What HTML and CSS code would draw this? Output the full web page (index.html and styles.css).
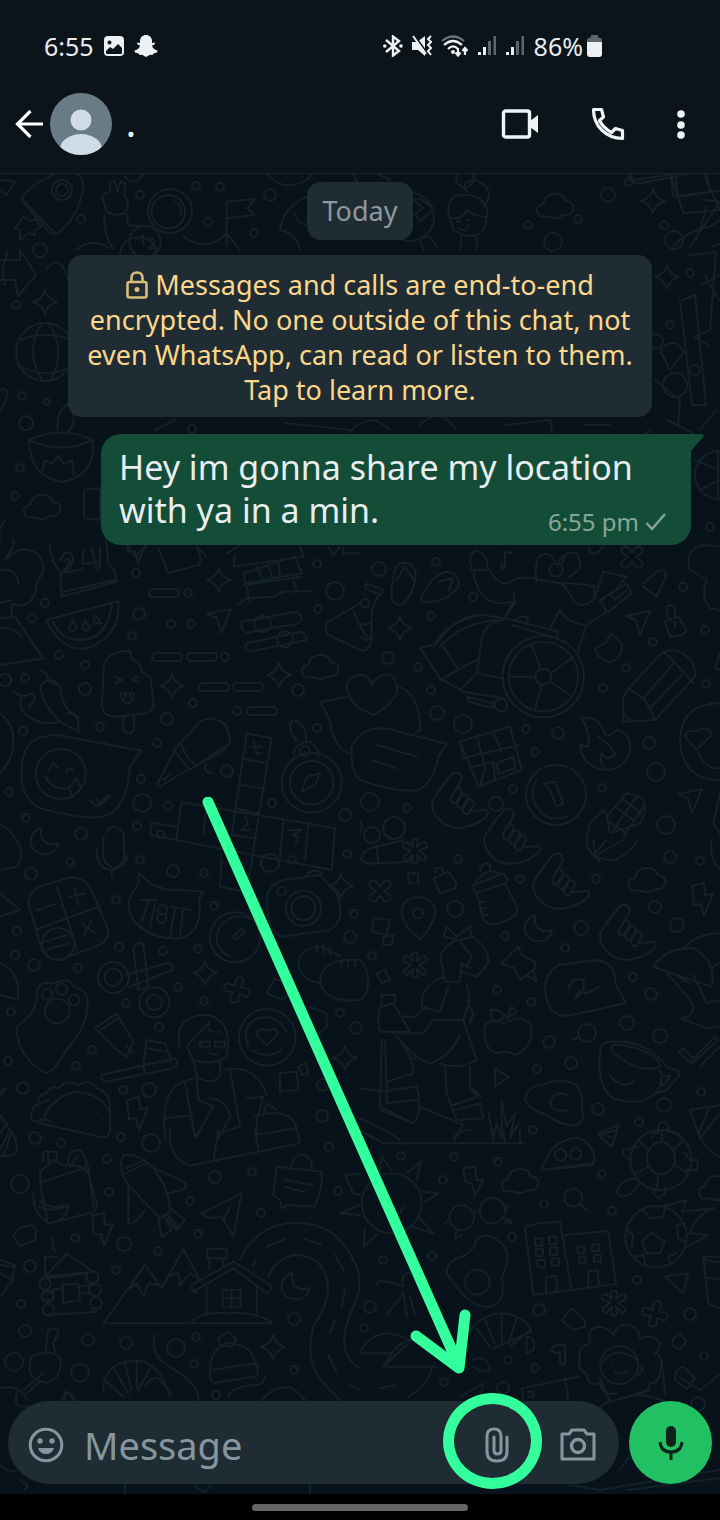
FILE: index.html
```html
<!DOCTYPE html>
<html lang="en">
<head>
  <meta charset="UTF-8">
  <meta name="viewport" content="width=device-width, initial-scale=1.0">
  <title>WhatsApp chat</title>
  <link rel="stylesheet" href="styles.css">
</head>
<body>

  <div class="status-bar">
    <div class="status-left">
      <span class="clock">6:55</span>
      <svg width="20" height="20" viewBox="0 0 20 20"><path fill="#edf1f3" fill-rule="evenodd" d="M4 0H16Q20 0 20 4V16Q20 20 16 20H4Q0 20 0 16V4Q0 0 4 0ZM5.500 4.500A2 2 0 1 0 5.510 4.500ZM2 15V17Q2 18 3 18H17Q18 18 18 17V12L14 8L9 13L6 11Z"/></svg>
      <svg width="24" height="22" viewBox="0 0 24 22"><path fill="#edf1f3" d="M12 0C15.500 0 18 2.500 18 6V8L21 7.600L20.500 9.600L18 10.500C18.500 13 20.500 14.800 23.500 15.500L23 17.500L19.500 18.500L18.500 20L16 19.700L12 22L8 19.700L5.500 20L4.500 18.500L1 17.500L.5 15.500C3.500 14.800 5.500 13 6 10.500L3.500 9.600L3 7.600L6 8V6C6 2.500 8.500 0 12 0Z"/></svg>
    </div>
    <div class="status-right">
      <svg width="20" height="22" viewBox="0 0 20 22"><path fill="none" stroke="#edf1f3" stroke-width="2.400" d="M3 5L16 16L10 20.500V1.500L16 6L3 17"/><circle cx="1.800" cy="11" r="1.800" fill="#edf1f3"/><circle cx="18" cy="11" r="1.800" fill="#edf1f3"/></svg>
      <svg width="20" height="22" viewBox="0 0 20 22"><path fill="#edf1f3" d="M0 7H5L13 1V21L6 15H0Z"/><path stroke="#0b141a" stroke-width="2" d="M3 1L15 18"/><path fill="none" stroke="#edf1f3" stroke-width="2" d="M1 1L14 19"/><path fill="none" stroke="#edf1f3" stroke-width="2" d="M19 1L16 4L19 7L16 10L19 13L16 16L19 20"/></svg>
      <svg width="28" height="22" viewBox="0 0 28 22"><g fill="none" stroke="#edf1f3" stroke-width="2.200"><path stroke="#68727a" d="M1 6Q12-3 23 6"/><path d="M3 10Q12 2 21 10M7 14Q12 9 17 14"/><path d="M17 13V20M14.500 17.500L17 20.500L19.500 17.500M24 20V13M21.500 16L24 13L26.500 16"/></g><circle cx="12" cy="17" r="2" fill="#edf1f3"/></svg>
      <svg width="19" height="22" viewBox="0 0 19 22"><path fill="#edf1f3" d="M0 17H3V20H0ZM5 12H8V20H5Z"/><path fill="#5c666d" d="M10 6H13V20H10ZM15.500 1H18V20H15.500Z"/></svg>
      <svg width="19" height="22" viewBox="0 0 19 22"><path fill="#edf1f3" d="M0 17H3V20H0ZM5 12H8V20H5Z"/><path fill="#5c666d" d="M10 6H13V20H10ZM15.500 1H18V20H15.500Z"/></svg>
      <span class="battery"><span>86%</span>
      <svg width="15" height="22" viewBox="0 0 15 22"><path fill="#5c666d" d="M4 0H11V2L15 4V9H0V4L4 2Z"/><path fill="#edf1f3" d="M0 7H15V19Q15 22 12 22H3Q0 22 0 19Z"/></svg></span>
    </div>
  </div>

  <header class="app-bar">
    <button type="button" class="icon-button back" aria-label="Back"><svg width="28" height="28" viewBox="0 0 28 28"><path fill="none" stroke="#fff" stroke-width="3.200" d="M28 14H3M15.500 1L2.500 14L15.500 27"/></svg></button>
    <svg class="avatar" width="62" height="62" viewBox="0 0 62 62"><defs><clipPath id="face"><circle cx="31" cy="31" r="31"/></clipPath></defs><circle cx="31" cy="31" r="31" fill="#687b86"/><g clip-path="url(#face)" fill="#d0dce5"><circle cx="31" cy="27" r="10.500"/><ellipse cx="31" cy="56" rx="21" ry="15"/></g></svg>
    <h1 class="contact">.</h1>
    <div class="actions">
      <button type="button" class="icon-button" aria-label="Video call"><svg width="38" height="34" viewBox="0 0 38 34"><rect x="2.500" y="4" width="26" height="26" rx="2" fill="none" stroke="#f0f4f6" stroke-width="3.400"/><path fill="#f0f4f6" d="M29 14L37 8V26L29 20Z"/></svg></button>
      <button type="button" class="icon-button" aria-label="Call"><svg width="34" height="34" viewBox="0 0 34 34"><path fill="none" stroke="#f0f4f6" stroke-width="3.200" stroke-linejoin="round" d="M2.500 2.500H10.500L12.500 10L8.500 13.500C11 18.500 15 22.500 20.500 25.500L24.500 21.500L31.500 23.500V31.500C15 31.500 2.500 19 2.500 2.500Z"/></svg></button>
      <button type="button" class="icon-button more" aria-label="More options"><svg width="8" height="30" viewBox="0 0 8 30"><g fill="#f0f4f6"><circle cx="4" cy="5" r="3.800"/><circle cx="4" cy="16" r="3.800"/><circle cx="4" cy="26" r="3.800"/></g></svg></button>
    </div>
  </header>

  <main class="chat">
    <svg class="wallpaper" viewBox="0 174 720 1320" preserveAspectRatio="xMidYMin slice" aria-hidden="true">
      <defs>
        <path id="star" d="M0-12Q2-3 12 0Q2 3 0 12Q-2 3-12 0Q-2-3 0-12Z"/>
        <path id="bolt" d="M-10-14L2-17L3-5L11-6L2 16L-1 4L-8 5Z"/>
        <path id="plane" d="M-12-6L12-11L2 13L-2-2Z"/>
        <path id="cloud" d="M-16 10Q-22 0-12-2Q-10-12 0-12Q10-12 10-5Q20-4 18 4Q16 10 8 9Q2 14-4 11Z"/>
        <path id="cross" d="M-3-3L-4-9Q-4-13 0-13Q4-13 4-9L3-3L9-4Q13-4 13 0Q13 4 9 4L3 3L4 9Q4 13 0 13Q-4 13-4 9L-3 3L-9 4Q-13 4-13 0Q-13-4-9-4Z"/>
        <path id="flower" d="M-2-4L-3-11Q0-14 3-11L2-4L8-9Q13-8 12-4L4 0L11 5Q12 9 8 10L2 4L3 11Q0 14-3 11L-2 4L-8 10Q-12 9-11 5L-4 0L-12-4Q-13-8-8-9Z"/>
        <path id="moon" d="M-4-13Q-16-8-14 4Q-10 14 2 13Q12 12 13 2Q4 5-1 0Q-5-5-4-13Z"/>
        <path id="pill" d="M-11-4H11Q15-4 15 0Q15 4 11 4H-11Q-15 4-15 0Q-15-4-11-4Z"/>
        <path id="hand" d="M-17 0Q-10-13 3-28Q12-32 13-23L2-4L8-14Q13-14 13-9L7 1Q2 2 2-4M8 1L14-8Q19-8 19-3L13 6Q8 7 8 1M14 6L20-3Q26-2 25 3L19 12Q13 13 14 6M23 9L38 8Q42 13 30 20Q10 30-3 23Q-18 13-17 0"/>
      </defs>
      <g class="dots">
        <circle cx="62" cy="190" r="10"/><circle cx="62" cy="190" r="6"/><circle cx="140" cy="195" r="4"/><circle cx="170" cy="211" r="22"/><circle cx="196" cy="186" r="4"/><circle cx="220" cy="187" r="4"/><circle cx="270" cy="195" r="6"/><circle cx="208" cy="222" r="4"/><circle cx="254" cy="233" r="4"/><circle cx="81" cy="219" r="4"/>
        <circle cx="465" cy="178" r="9"/><circle cx="608" cy="195" r="7"/><circle cx="629" cy="182" r="4"/><circle cx="578" cy="219" r="4"/><circle cx="528" cy="225" r="4"/><circle cx="664" cy="225" r="4"/><circle cx="553" cy="242" r="9"/><circle cx="410" cy="217" r="24"/><circle cx="674" cy="240" r="9"/>
        <circle cx="40" cy="250" r="7"/><circle cx="16" cy="305" r="4"/><circle cx="690" cy="273" r="4"/><circle cx="670" cy="325" r="4"/><circle cx="656" cy="341" r="7"/><circle cx="45" cy="352" r="29"/><circle cx="26" cy="423" r="7"/><circle cx="22" cy="396" r="4"/><circle cx="47" cy="402" r="3"/><circle cx="20" cy="468" r="4"/><circle cx="15" cy="496" r="4"/><circle cx="192" cy="429" r="4"/><circle cx="710" cy="527" r="4"/><circle cx="695" cy="370" r="5"/><circle cx="719" cy="475" r="24"/><circle cx="675" cy="385" r="12"/>
        <circle cx="136" cy="573" r="4"/><circle cx="45" cy="603" r="4"/><circle cx="32" cy="618" r="4"/><circle cx="188" cy="593" r="4"/><circle cx="139" cy="614" r="6"/><circle cx="171" cy="624" r="4"/><circle cx="191" cy="624" r="4"/><circle cx="132" cy="636" r="4"/><circle cx="59" cy="655" r="4"/><circle cx="85" cy="665" r="4"/><circle cx="25" cy="678" r="4"/><circle cx="85" cy="689" r="6"/><circle cx="193" cy="703" r="4"/><circle cx="167" cy="719" r="6"/><circle cx="100" cy="727" r="4"/><circle cx="23" cy="731" r="4"/><circle cx="157" cy="743" r="4"/><circle cx="227" cy="771" r="6"/><circle cx="141" cy="779" r="4"/><circle cx="142" cy="803" r="9"/><circle cx="168" cy="806" r="4"/><circle cx="9" cy="792" r="4"/><circle cx="26" cy="818" r="4"/><circle cx="225" cy="657" r="4"/><circle cx="298" cy="690" r="6"/><circle cx="317" cy="564" r="4"/><circle cx="335" cy="591" r="9"/><circle cx="318" cy="609" r="4"/><circle cx="317" cy="728" r="4"/><circle cx="237" cy="711" r="4"/><circle cx="272" cy="803" r="4"/><circle cx="345" cy="815" r="6"/><circle cx="137" cy="826" r="4"/><circle cx="81" cy="834" r="6"/><circle cx="5" cy="680" r="6"/>
        <circle cx="379" cy="569" r="7"/><circle cx="436" cy="562" r="4"/><circle cx="473" cy="597" r="4"/><circle cx="431" cy="616" r="4"/><circle cx="388" cy="658" r="6"/><circle cx="418" cy="667" r="4"/><circle cx="431" cy="690" r="4"/><circle cx="437" cy="713" r="7"/><circle cx="463" cy="724" r="9"/><circle cx="526" cy="729" r="4"/><circle cx="558" cy="733" r="6"/><circle cx="535" cy="752" r="4"/><circle cx="513" cy="789" r="4"/><circle cx="496" cy="804" r="7"/><circle cx="407" cy="808" r="4"/><circle cx="370" cy="802" r="9"/><circle cx="394" cy="828" r="11"/><circle cx="372" cy="835" r="8"/><circle cx="603" cy="688" r="4"/><circle cx="626" cy="668" r="4"/><circle cx="653" cy="642" r="4"/><circle cx="705" cy="630" r="4"/><circle cx="683" cy="587" r="4"/><circle cx="706" cy="684" r="4"/><circle cx="649" cy="743" r="6"/><circle cx="656" cy="772" r="9"/><circle cx="602" cy="788" r="4"/><circle cx="666" cy="825" r="9"/>
        <circle cx="31" cy="874" r="6"/><circle cx="70" cy="862" r="4"/><circle cx="140" cy="860" r="4"/><circle cx="173" cy="871" r="6"/><circle cx="204" cy="873" r="4"/><circle cx="116" cy="900" r="4"/><circle cx="214" cy="906" r="4"/><circle cx="17" cy="931" r="4"/><circle cx="15" cy="955" r="4"/><circle cx="34" cy="965" r="6"/><circle cx="78" cy="968" r="4"/><circle cx="119" cy="947" r="4"/><circle cx="163" cy="951" r="4"/><circle cx="198" cy="949" r="4"/><circle cx="126" cy="1003" r="4"/><circle cx="178" cy="987" r="4"/><circle cx="204" cy="1001" r="4"/><circle cx="11" cy="1012" r="4"/><circle cx="159" cy="1027" r="4"/><circle cx="92" cy="1050" r="4"/><circle cx="76" cy="1066" r="4"/><circle cx="8" cy="1061" r="4"/><circle cx="23" cy="1088" r="6"/><circle cx="123" cy="1090" r="4"/><circle cx="149" cy="1090" r="7"/><circle cx="270" cy="863" r="9"/><circle cx="292" cy="860" r="4"/><circle cx="347" cy="854" r="4"/><circle cx="350" cy="937" r="6"/><circle cx="354" cy="914" r="4"/><circle cx="340" cy="1013" r="4"/><circle cx="356" cy="1028" r="6"/><circle cx="322" cy="1116" r="6"/><circle cx="323" cy="1085" r="6"/>
        <circle cx="458" cy="859" r="4"/><circle cx="520" cy="879" r="4"/><circle cx="455" cy="909" r="8"/><circle cx="505" cy="936" r="4"/><circle cx="581" cy="928" r="7"/><circle cx="596" cy="879" r="4"/><circle cx="670" cy="857" r="6"/><circle cx="700" cy="861" r="4"/><circle cx="655" cy="907" r="6"/><circle cx="677" cy="925" r="7"/><circle cx="565" cy="948" r="4"/><circle cx="633" cy="977" r="4"/><circle cx="651" cy="994" r="6"/><circle cx="497" cy="990" r="4"/><circle cx="531" cy="1002" r="4"/><circle cx="587" cy="1033" r="9"/><circle cx="549" cy="1042" r="6"/><circle cx="627" cy="1023" r="7"/><circle cx="660" cy="1036" r="7"/><circle cx="571" cy="1063" r="6"/><circle cx="537" cy="1069" r="4"/><circle cx="598" cy="1109" r="6"/><circle cx="664" cy="1105" r="7"/><circle cx="701" cy="1092" r="4"/><circle cx="639" cy="1122" r="4"/><circle cx="533" cy="1130" r="4"/><circle cx="372" cy="956" r="4"/>
        <circle cx="35" cy="1138" r="6"/><circle cx="61" cy="1143" r="4"/><circle cx="121" cy="1137" r="4"/><circle cx="151" cy="1143" r="9"/><circle cx="107" cy="1159" r="4"/><circle cx="20" cy="1184" r="9"/><circle cx="109" cy="1192" r="4"/><circle cx="190" cy="1201" r="4"/><circle cx="215" cy="1177" r="6"/><circle cx="252" cy="1172" r="4"/><circle cx="261" cy="1213" r="4"/><circle cx="198" cy="1234" r="4"/><circle cx="124" cy="1244" r="7"/><circle cx="75" cy="1238" r="4"/><circle cx="158" cy="1251" r="4"/><circle cx="30" cy="1266" r="6"/><circle cx="116" cy="1270" r="4"/><circle cx="21" cy="1304" r="4"/><circle cx="25" cy="1331" r="6"/><circle cx="88" cy="1340" r="6"/><circle cx="126" cy="1343" r="6"/><circle cx="176" cy="1348" r="9"/><circle cx="196" cy="1337" r="4"/><circle cx="294" cy="1319" r="6"/><circle cx="329" cy="1147" r="4"/><circle cx="338" cy="1191" r="4"/><circle cx="14" cy="1362" r="9"/><circle cx="80" cy="1373" r="9"/><circle cx="194" cy="1364" r="4"/><circle cx="294" cy="1370" r="4"/><circle cx="216" cy="1395" r="4"/>
        <circle cx="401" cy="1156" r="4"/><circle cx="454" cy="1157" r="4"/><circle cx="498" cy="1162" r="4"/><circle cx="443" cy="1180" r="4"/><circle cx="544" cy="1204" r="4"/><circle cx="602" cy="1174" r="4"/><circle cx="612" cy="1211" r="4"/><circle cx="512" cy="1237" r="4"/><circle cx="432" cy="1256" r="4"/><circle cx="383" cy="1260" r="4"/><circle cx="370" cy="1307" r="6"/><circle cx="364" cy="1328" r="4"/><circle cx="539" cy="1310" r="6"/><circle cx="637" cy="1280" r="4"/><circle cx="690" cy="1314" r="6"/><circle cx="704" cy="1356" r="4"/><circle cx="535" cy="1368" r="4"/><circle cx="444" cy="1382" r="4"/><circle cx="503" cy="1388" r="6"/><circle cx="508" cy="1360" r="4"/><circle cx="698" cy="1404" r="7"/>
      </g>
      <g class="small">
        <use href="#star" x="219" y="580"/><use href="#star" x="172" y="686"/><use href="#star" x="279" y="675"/><use href="#star" x="400" y="628"/><use href="#star" x="205" y="973"/><use href="#star" x="341" y="886"/><use href="#star" x="345" y="1058"/><use href="#star" x="273" y="1347"/><use href="#star" x="45" y="302"/><use href="#star" x="667" y="277"/><use href="#star" x="653" y="201"/>
        <use href="#bolt" x="137" y="1114"/><use href="#bolt" x="102" y="1230"/><use href="#bolt" x="702" y="900"/><use href="#bolt" x="136" y="547"/>
        <use href="#plane" x="219" y="620"/><use href="#plane" x="638" y="622"/><use href="#plane" x="690" y="800"/>
        <use href="#cloud" x="42" y="507"/><use href="#cloud" x="320" y="667"/><use href="#cloud" x="555" y="206"/><use href="#cloud" x="647" y="880"/><use href="#cloud" x="520" y="1181"/><use href="#cloud" x="717" y="1188"/>
        <use href="#cross" transform="translate(380 891) rotate(45)"/><use href="#cross" transform="translate(632 557) rotate(45)"/><use href="#cross" transform="translate(237 990) rotate(15)"/><use href="#cross" transform="translate(655 1314) rotate(15)"/>
        <use href="#flower" x="415" y="965"/><use href="#flower" x="614" y="1303"/><use href="#flower" x="415" y="851"/>
        <use href="#moon" x="539" y="928"/><use href="#moon" x="296" y="1286"/><use href="#moon" x="45" y="841"/>
        <use href="#pill" x="164" y="593"/><use href="#pill" x="167" y="657"/><use href="#pill" x="202" y="657"/><use href="#pill" x="214" y="687"/><use href="#pill" x="248" y="687"/><use href="#pill" x="262" y="711"/>
        <use href="#hand" x="550" y="883"/><use href="#hand" x="617" y="934"/><use href="#hand" x="501" y="838"/><use href="#hand" x="449" y="802"/>
      </g>

      <!-- rocket, hand, flag, camera and people along the top -->
      <g class="large" transform="scale(.333333)">
        <path d="M0 540L45 545L20 585L0 570M65 600Q80 560 150 530L200 500Q250 520 250 560Q240 640 185 690Q170 710 145 695ZM75 605L165 700M70 650q20 20 40 5q0 20 15 25l-20 10v15l-20-5l-25 20v-30l-15-5z"/>
        <path d="M310 605Q300 580 330 575L330 545H345L352 575L362 545L376 550L372 585Q395 610 375 640Q340 650 320 635ZM312 645Q315 720 340 745M380 645L385 675L440 680M525 605Q550 615 540 645M375 530Q400 560 430 525M800 520Q850 580 920 540L960 500"/>
        <circle cx="505" cy="635" r="50"/><circle cx="435" cy="725" r="47"/>
        <path d="M430 705v30M415 715L430 705M445 720q15-10 18 3q0 15-18 22h20M230 750Q270 710 330 745M550 710Q620 760 680 700L720 750M680 735V605L765 597L742 625L765 645L680 655M840 690Q850 620 920 590M840 690Q890 700 900 750M885 640Q890 670 920 675M1060 520l15 35M1130 520l40 20l-15 20l25 20"/>
        <path d="M1240 600L1260 595L1300 625L1260 665L1245 640L1270 625ZM1345 640Q1340 580 1400 585Q1460 590 1462 640L1455 680Q1430 730 1360 690ZM1345 650Q1385 665 1400 630Q1420 650 1460 650M1400 575Q1380 540 1430 540Q1490 570 1450 620M1370 665h10M1400 660h10M1375 685Q1400 700 1405 675M1385 710L1380 750M1430 710V750M1270 750L1260 715L1290 710L1310 740M1885 520L1900 540L2040 520M1890 520Q1880 550 1920 550L2100 515M2020 740Q2060 690 2130 680Q2180 640 2220 660Q2230 700 2140 740M2160 650Q2190 680 2180 720"/>
        <path d="M2010 520L2020 590L2130 575L2120 515M2025 520L2035 590L2180 570M2100 500L2160 630L2050 640L2010 520M2110 600L2160 605L2070 740M2120 620L2090 720"/>
      </g>

      <g>
        <path d="M20 340Q46 330 72 340M18 365Q45 380 70 367M42 323Q24 350 42 381M48 323Q68 350 50 381M0 260L20 260V250L36 275L18 296L15 280L0 280M46 270Q60 250 68 280M8 250Q0 270 5 285M120 255Q122 235 145 238Q165 250 150 258M0 390Q12 385 4 405L0 410M29 440Q60 425 93 440Q96 475 63 482Q30 478 29 440ZM29 440Q60 455 93 440M42 473L45 460L52 464L58 456L64 464L72 460L74 475M58 430Q55 414 67 404Q80 418 68 432M5 520Q-3 530 0 540M84 490L100 488V520L84 518Z"/>
        <path d="M690 255L716 252L710 330L695 337L708 345M680 301L695 295L706 405L692 405ZM655 380L680 400L678 425M668 420L694 434M700 430L716 410M505 425L550 420L552 432M420 425Q440 405 455 428M350 432Q370 410 390 430M585 425H610M650 430L640 440M155 430L175 420M405 545L430 540M285 423L350 430"/>
        <path d="M660 350Q675 335 684 352L670 370ZM702 285L719 275M705 275L719 300M695 460L719 470M700 490L719 480M718 452V498"/>
      </g>

      <!-- calendar, melon, lolly, peppers, crossword -->
      <g class="large" transform="translate(0 540) scale(.333333)">
        <path d="M20 50L40 20V0M15 60Q60 10 110 40Q150 80 110 125Q110 180 70 195Q50 200 35 190V225M55 130Q50 80 0 90M0 190L35 180M0 235L45 230L130 355L0 375M0 265Q40 260 65 290M150 15Q150 60 180 95L185 170L350 125Q350 90 325 70L318 0M190 155L345 120"/>
        <path d="M183 60Q190 30 212 40Q232 60 195 98L245 88M193 62Q205 50 210 62Q205 75 183 105M250 30L248 72L300 65M275 20L290 90M300 25V85"/>
        <path d="M140 240L355 183Q360 250 320 290Q240 360 175 295Q145 260 140 240ZM160 245Q180 300 240 300Q320 300 335 195M220 240L205 265Q215 280 230 265ZM255 240L248 265Q260 280 270 262ZM285 225L280 250L305 250Z"/>
        <path d="M390 333Q310 330 310 400L306 500Q310 530 345 530L440 520Q465 510 460 480L450 410L425 395L420 375L395 355ZM370 530V570Q385 590 402 570V527M345 410L365 420L345 430M415 408L395 418L415 425M360 460H402Q400 490 380 490Q365 485 360 460M375 463V475M390 463V475"/>
        <path d="M40 455L65 470Q50 500 80 525Q120 560 180 545L235 575L235 530Q190 520 180 440Q150 400 120 440Q130 500 180 545M65 470L100 460L105 480L85 500M120 390L140 400L145 425L185 440M200 520Q220 505 230 535"/>
        <path d="M0 520Q40 550 40 600Q40 660 0 700M65 700Q65 600 130 590Q170 580 210 592L425 632L390 680Q380 780 345 810Q310 840 250 830Q160 820 110 800Q60 760 65 700Z"/><circle cx="182" cy="702" r="75"/>
        <path d="M135 705Q150 750 205 745M145 690l15-20l15 15M200 695q5-20 20-2M230 715L243 745L220 770L205 745ZM270 780L290 800L325 765M290 775L300 795L330 770"/>
        <path d="M540 610L600 545Q640 520 680 560Q690 590 690 610L590 675L570 690L520 630ZM545 615Q560 660 590 675M520 640L470 735L480 740L560 690M490 720L515 700M650 540Q680 545 680 570M590 675L660 640L690 610M620 670Q605 695 635 700"/>
        <path d="M740 580L815 595L765 895L695 885ZM732 658L803 668M720 735L790 745M705 805L775 820M545 787L1005 865L995 990L450 885L455 848L530 860M545 787L528 900M620 800L610 880M850 845L840 950M925 855L915 960M760 605L770 640H785M755 620H785M735 830L745 850L725 870H750M865 870L905 870L880 885Q905 890 885 910M470 875Q490 865 495 890L475 895Z"/>
        <path d="M475 25L505 100L595 75Q610 60 590 20M590 20L620 50M680 40L720 15M385 20L405 50L440 15M705 45L700 80L910 50L900 20M730 100L885 50L905 100L735 130ZM770 80L790 120M805 75L815 110M835 60L840 105M730 135L905 110M740 140L750 190M880 125L890 150M710 195L740 175L820 170L850 155L935 153M985 20L1000 45L1020 20M1030 20V40H1080"/>
        <path d="M725 245L880 217Q905 215 905 240Q900 255 850 258L740 278Q720 270 725 245ZM740 310L900 275Q920 280 920 300L750 335Q730 330 740 310Z"/><circle cx="788" cy="252" r="25"/><circle cx="855" cy="298" r="24"/>
        <circle cx="935" cy="728" r="90"/><circle cx="935" cy="728" r="65"/><circle cx="915" cy="633" r="15"/>
        <path d="M880 540Q860 550 880 590L890 605M880 540Q920 550 918 600M880 640Q890 605 930 605Q960 630 955 650M905 755L920 710L960 700L945 735Z"/>
        <path d="M1080 190L985 245Q970 260 985 285L1080 330M1060 215Q1080 260 1100 290M960 487L1040 470M960 487Q990 530 995 570Q1010 630 1050 640M0 855Q30 860 60 920Q70 960 50 980L0 990M320 880Q320 860 345 860Q375 870 372 900V960Q340 1010 310 955V890M290 925Q290 990 335 990Q380 980 382 945M335 990V1010"/>
      </g>

      <!-- slippers, turtle, wheel, pencil, fire, chocolate -->
      <g class="large" transform="translate(360 540) scale(.333333)">
        <path d="M95 165Q95 90 120 70Q165 60 168 110Q150 190 115 195Q95 190 95 165ZM110 120L135 80L165 125M185 170Q220 100 260 95Q300 100 295 140Q270 180 200 187Q180 190 185 170ZM235 125L280 115L265 155M20 130L70 150L62 165L15 145ZM55 165L35 210V300Q25 340 0 330M0 255L35 250M0 290Q20 310 35 290"/>
        <circle cx="15" cy="190" r="13"/><circle cx="550" cy="410" r="122"/><circle cx="550" cy="410" r="104"/><circle cx="550" cy="410" r="24"/><circle cx="423" cy="495" r="19"/>
        <path d="M542 387L515 315M573 400L640 350M570 425L630 465M545 435L525 510M525 410H445M330 60Q330 40 350 30Q390 50 380 90L335 90ZM340 90Q350 190 430 190L460 185L430 240M385 85Q420 150 460 120Q500 105 540 120L600 130Q660 130 705 140L700 180Q660 210 640 180Q620 140 600 130M460 160L465 190L430 240M430 35L455 40M435 40V85Q420 90 428 70"/>
        <path d="M530 125Q520 60 545 45Q570 30 590 75M590 75Q610 30 650 40Q680 90 625 110M605 70L620 40"/><circle cx="588" cy="90" r="20"/>
        <path d="M570 265L600 210Q620 250 680 255L740 215L720 180L800 130L815 160L745 215M680 255L655 330M705 175L730 95L800 110L770 145M720 185L750 160L765 180L800 150M850 130L890 95Q915 80 918 110L890 170L850 140"/>
        <path d="M180 325L230 310Q290 220 370 225L460 240L595 275L590 295L455 255M180 325L240 415L310 455L430 475M220 320Q260 240 370 225M240 320Q300 250 410 240M430 240Q370 250 365 300L350 400L300 450M250 320L295 390L240 420M300 385L350 360M350 400L425 415M320 470L400 490V505L325 485ZM470 240Q480 220 505 235L500 255"/>
        <path d="M915 245L955 230L980 270L965 285L930 290ZM925 230L920 210Q915 190 945 200V230M945 245v15M705 325L735 310L755 280L785 310Q790 350 750 368L715 350ZM805 445L905 340Q935 320 970 340Q1010 370 1005 410L885 540L790 545L790 470ZM805 445L850 475L870 505L885 540M850 475L940 370M870 505L965 405M915 340Q950 370 1000 430M790 520L815 545"/>
        <path d="M665 535Q720 525 735 585Q750 590 770 570Q815 580 810 635Q790 690 735 690Q665 680 660 615L685 620Q690 570 665 535ZM715 590Q745 610 765 640Q760 655 740 655L725 640Q715 670 740 690M1080 490Q970 490 960 590Q960 720 1080 720M975 590Q980 565 1010 575Q1045 550 1055 585L1010 630ZM1015 640Q1040 690 1080 685"/>
        <path d="M300 605L450 560L485 690L355 740ZM300 605L310 655L475 615M350 585L375 680L360 740M400 575L425 635M325 685L400 665L405 720M410 670L460 650L465 685L415 700ZM35 435Q50 400 90 405Q115 420 110 460Q90 500 40 525L-10 500Q-40 470-40 430Q-20 400 10 405Q30 410 35 435M115 440Q180 460 180 570L165 580M0 720Q-30 700-25 620Q0 560 80 565L260 612L235 650Q220 730 175 750Q110 760 0 720M50 615L170 650M35 660L110 685"/>
        <circle cx="588" cy="765" r="90"/><path d="M530 720Q505 760 530 800Q560 850 620 830M550 730L585 725L610 790L590 800L570 750ZM680 895L690 850L730 810L745 830M740 830L800 760L840 770Q870 800 840 850L750 880ZM765 800L820 840M785 775L845 820M740 840L800 880M830 770L760 870M850 800L790 890M1080 760L1060 850L1080 880M685 25Q700 60 730 20M990 90Q970 30 1030 15L1080 20M990 90L1040 120Q1020 170 1050 205L1080 210M1080 340L1065 385L1080 390"/>
      </g>

      <!-- tiles, cat, camera, scissors, reader, taco -->
      <g class="large" transform="translate(0 840) scale(.333333)">
        <path d="M85 190Q90 150 120 140L210 112Q250 110 275 150L325 270Q325 310 285 320L180 360Q130 360 120 310ZM110 268L300 198M170 140L232 328M110 210L170 190M205 170L255 160M225 145L235 195M245 250L285 280M275 240L250 290M135 305L200 285M140 330L205 310M0 160L60 210L0 230"/><circle cx="175" cy="312" r="48"/>
        <path d="M415 100L450 130Q500 155 540 150L610 155Q590 180 600 200Q600 280 540 295Q450 300 400 240Q380 210 390 170L415 130ZM445 185L425 245M465 190L450 265M550 205L540 285M525 205L510 290"/><circle cx="488" cy="210" r="14"/><circle cx="485" cy="235" r="14"/><path d="M420 180H470M510 200L570 210"/>
        <circle cx="705" cy="292" r="75"/><path d="M760 240Q700 210 660 260Q630 320 690 350M700 290L725 265L735 275L710 300Z"/><circle cx="910" cy="205" r="53"/><circle cx="910" cy="205" r="36"/><circle cx="845" cy="153" r="13"/>
        <path d="M800 170Q810 130 850 120L960 105L1010 160Q1040 240 990 270L850 290Q800 280 800 170ZM915 110Q940 80 965 100M895 370Q900 320 970 320L1020 350M895 370Q900 420 960 430M1080 360Q960 350 960 430Q980 490 1080 480Q1100 470 1105 430Q1105 380 1080 360M950 335v-20M970 340v-25M990 345v-20M1025 380v-20M1045 380v-20M1065 380v-20M800 460L825 415L880 440L850 480ZM665 60L660 140L740 155L765 0"/>
        <circle cx="340" cy="412" r="46"/><circle cx="340" cy="412" r="26"/><circle cx="463" cy="487" r="45"/><circle cx="463" cy="487" r="23"/>
        <path d="M400 325Q410 300 430 315L445 440L415 450ZM380 405L500 370Q525 370 518 390L390 440M0 370Q60 390 55 480L0 465M50 560Q110 520 110 470Q110 420 160 430Q210 410 220 440Q270 450 262 500Q260 560 200 630Q160 700 135 698Q50 650 50 560Z"/>
        <circle cx="172" cy="513" r="37"/><circle cx="142" cy="463" r="16"/><circle cx="185" cy="448" r="17"/><circle cx="222" cy="480" r="16"/><circle cx="802" cy="592" r="85"/>
        <path d="M745 620Q720 560 770 535Q830 520 860 575M755 630Q800 660 845 630M800 615L770 585Q770 560 800 572Q835 560 832 585ZM285 565L350 520L400 605L380 650L345 625ZM300 570L355 535M380 620L400 635M440 600L495 610L515 660L430 675ZM440 625L500 635M305 705L525 655Q540 670 520 685L320 725Q300 720 305 705ZM430 680L435 700"/>
        <path d="M540 620Q520 540 600 525Q660 520 680 575L685 600L680 650Q640 680 580 660L560 620M560 620Q600 570 630 545Q610 580 660 575M600 605h30v15h-30ZM645 605h30v15h-30ZM630 640L650 645M580 660L590 710Q640 740 660 705V670M495 895Q480 750 550 725L580 715M670 690Q770 670 800 765M495 835L580 825M555 725L585 895L640 800L595 780L590 715M690 690L720 860L655 880M630 775Q680 780 690 830L655 895M740 775L790 770L770 840V895M790 820L800 790L830 810M765 830Q890 790 895 895M765 885L890 865M840 700L890 695L895 750L840 755ZM895 680L920 670L925 700L905 705Z"/>
        <path d="M95 840Q90 800 115 790Q110 765 140 760Q150 735 175 745Q200 715 235 735Q270 715 290 745Q325 755 330 790V870Q330 895 300 890L120 850ZM125 850Q150 770 230 755Q300 760 325 810M105 845Q130 830 150 845M100 800L145 780M280 845v1M305 840v1M290 820v1M0 755L15 745L0 770M0 825L50 900M0 880L20 850"/>
        <path d="M930 500L980 520V560L950 590"/>
      </g>

      <!-- bottle, walker, apple, cup, frog -->
      <g class="large" transform="translate(360 840) scale(.333333)">
        <path d="M5 60Q0 30 50 20L130 0M50 20L55 70M5 60Q20 75 60 70L150 65"/>
        <path d="M340 135L430 100Q450 120 435 130L345 160ZM345 130Q370 80 420 100M360 95Q365 60 390 75V90M350 160L370 240Q390 260 420 250L460 230Q475 220 470 200L435 130M355 185h20M360 205h20M365 225h20"/>
        <path d="M145 100h30v30h-30ZM220 115L265 95L290 130L285 145L240 160ZM225 100Q220 80 245 85L250 100M125 215Q130 170 180 172Q230 180 225 225Q210 270 180 298Q130 260 125 215Z"/><circle cx="174" cy="220" r="15"/>
        <path d="M40 235L90 240L80 285L35 275ZM70 290L100 285L95 315L70 315ZM50 400L75 390L90 420L65 430ZM250 290L260 260L290 290L330 260L335 290L300 300ZM290 300Q230 330 245 370L255 425H300L305 370L330 385M340 290Q390 330 385 370L350 410L300 395M300 300L335 350L320 380M250 410Q180 440 185 500L240 515L265 440M320 430L330 480L310 540H220L190 580H100M130 530H165L190 505M60 500L100 490L150 575H60Q50 540 60 500ZM65 490V465H105V490M110 590Q170 660 210 670Q270 650 300 585M310 540L350 660Q300 690 240 670M150 655Q160 650 170 660M75 600L80 735M110 590Q160 650 160 700L80 725V790L170 780M65 600L60 800L160 850Q190 820 170 740L90 750M255 680L260 760L290 840M330 680V740L350 770L280 795M285 810L360 790L370 835L300 840M330 740L365 770M0 745L90 755M180 800L310 855L280 895M385 820L400 895L410 850L425 895L425 785L440 860L465 820L450 895L475 850M320 480L340 520L330 550M60 810L160 850M0 835Q80 870 120 900M0 870L40 895"/>
        <path d="M425 370L475 320L485 345L525 365L525 385L480 420L465 385ZM500 405L520 390L530 425ZM435 550Q390 530 373 560Q370 630 410 640Q440 630 465 645Q520 620 515 560Q490 520 445 545L435 525M390 510Q430 505 430 535L400 545ZM440 535L455 500L470 515Z"/>
        <path d="M555 440Q560 390 600 375L710 360Q770 370 765 430L798 490L620 528Q560 530 555 440ZM625 450Q630 410 670 420Q680 450 645 475L655 455L680 460L720 440M880 380Q920 320 1000 325Q1070 360 1055 440Q960 410 880 380ZM970 325Q1010 280 1080 280M920 400Q980 460 1000 500Q1000 530 965 535L1040 565L1080 560M1000 405L1040 490L1080 480M1055 385L1080 365M955 410L990 430M720 640Q720 600 760 605Q860 600 920 680M720 640Q710 740 760 775Q830 800 880 765Q920 730 900 690M755 620Q760 605 830 625Q900 650 900 680Q850 700 790 660Q755 640 755 620ZM925 685Q970 690 955 710L920 750L885 760M905 710L930 705L915 735H900ZM750 705Q780 750 820 725M745 675v1M830 710v1M635 600L660 590"/>
        <path d="M955 635L995 670L1075 600L1065 590L1000 655L970 625ZM1020 680L1080 620M990 810L1080 795M990 810L1020 895L1080 820M1050 800L1015 880M405 685L447 712L405 738ZM495 780Q500 735 550 735Q600 710 650 735Q670 760 665 800Q680 850 640 857Q590 850 560 825Q510 810 495 780ZM620 765Q580 750 570 790Q580 820 620 810M715 880L775 855L765 895ZM0 -20Q10 -40 0 -60M875 895Q880 870 895 880Q890 850 910 845Q930 850 925 875Q950 870 965 895M680 0Q680 60 760 60Q800 50 835 0M700 45L740 0M700 50L790 0M700 0L705 50L720 65M1055 0Q1045 50 1080 90"/>
      </g>

      <!-- backpack, rocket, cabin, mountains, road -->
      <g class="large" transform="translate(0 1130) scale(.333333)">
        <path d="M120 125L160 90L190 105H220Q255 110 265 130L290 220Q290 250 270 250L145 280Q120 180 120 125ZM125 155L255 115M265 110L280 230M130 95V65H170V90M145 95V70M205 100Q200 60 240 60Q270 90 255 115M210 110L230 80M100 190Q100 260 150 280Q200 270 205 225Q160 250 115 230M120 215Q160 240 190 225M0 80L45 75Q60 50 35 5L10 80M0 60L25 10"/>
        <path d="M370 75Q350 120 390 170L480 265L510 245Q510 180 460 115Q420 70 370 75ZM375 115L425 95M375 130L440 100M465 115L550 155Q570 170 545 180L505 190M385 165V280Q400 290 435 240M475 265L485 320L515 300L490 255M500 250L535 295L555 270L510 235M500 265L530 300M510 110"/>
        <path d="M605 250L725 190L700 318L665 260Q620 270 605 250ZM670 270L690 230M820 195L830 110L965 125Q970 160 945 230L865 225L845 235L840 210ZM875 110Q880 70 910 75Q940 85 935 120M855 150L940 165M855 170L910 185M510 0Q500 80 570 107L900 40L890 0M640 95L655 0M765 0L775 60M580 0L590 20L600 0"/>
        <path d="M40 320L55 295L95 285L110 300L105 330L60 348ZM155 320Q165 330 155 350L165 365M135 440V380H170M135 440L200 372L280 425ZM140 445L265 430M140 555L290 545M130 485H160V510H125M185 465L235 460L240 510L190 520ZM155 480L185 475M235 470L270 465M235 490L270 490M190 520V460"/><circle cx="135" cy="462" r="17"/><circle cx="143" cy="500" r="17"/><circle cx="145" cy="540" r="17"/><circle cx="277" cy="442" r="18"/><circle cx="285" cy="480" r="18"/><circle cx="288" cy="520" r="18"/>
        <path d="M0 390L45 405L35 455L0 500M0 405L40 410M0 430L40 450M310 580L435 405L485 475L550 358L600 450M390 475L410 460L430 500L445 460L475 465M500 440L535 430L540 465L570 430L595 445M310 580H815M580 485L700 415L800 490Q820 480 812 465L700 395L575 465Q570 480 590 490M620 470V555M770 475V555M668 480H722V532H668ZM695 480V532M668 505H722M575 575Q600 545 680 550Q770 545 815 578M628 415V385M670 405V385M622 357H680V385H622Z"/>
        <path d="M720 390Q770 280 890 278Q1010 280 1060 390Q1090 440 1070 510Q1000 650 1060 700L1080 715M760 410L765 390M805 440Q830 380 890 375Q980 380 985 480Q980 530 940 590Q910 700 980 770L1020 810M800 350L855 328M915 328L965 345M1005 375L1030 420M1035 480L1025 530M1005 570L990 610M985 675L1010 725M1045 765L1080 780"/>
        <path d="M135 670L145 600Q175 590 175 610L160 640L165 665M90 700Q90 670 125 670Q180 660 182 700Q180 750 140 758Q80 750 90 700ZM70 780L130 730M80 790L120 755M0 775Q60 760 80 810M630 720Q630 660 680 640Q760 640 765 705M630 720L770 700Q780 730 765 740L640 758Q625 750 630 720ZM655 625L685 605L710 630L695 650L660 645ZM310 780Q310 700 400 692Q480 690 510 800M320 755L370 800M345 720L385 790M375 700L395 780M410 695V775M455 705L415 780M435 770Q450 740 475 745L515 790M465 615Q450 670 500 705Q600 760 595 810M685 800Q690 770 770 765Q790 765 795 740M785 810Q830 760 880 775L915 810M195 810L195 785Q220 790 225 810M1080 130L1035 135L1060 190L1080 195M1080 225L1020 250L1080 255"/>
      </g>

      <!-- sun, city, ball, egg, croissant, lion -->
      <g class="large" transform="translate(360 1130) scale(.333333)">
        <path d="M20 10L70 40H490M280 40Q290 0 330 0M400 0V40M430 0L435 40M480 0V40M545 120Q560 70 590 45Q660 0 690 50Q710 80 700 100ZM545 120L700 105M715 15L770 0L755 50Z"/><circle cx="602" cy="75" r="17"/><circle cx="647" cy="72" r="17"/><circle cx="95" cy="220" r="90"/><circle cx="640" cy="203" r="27"/><path d="M657 220L680 240M60 125L65 80L95 120M140 130L182 95L170 150M185 185L235 190L195 215M175 260L220 310L155 290M15 300L10 350L50 315M130 230Q120 260 100 255"/>
        <circle cx="305" cy="263" r="37"/><circle cx="397" cy="242" r="38"/><path d="M340 250L360 240M270 265L255 280M290 300L285 325L305 315M430 225L445 230L435 245M425 265Q450 265 455 280L435 275M310 115L345 110L350 150L370 150L345 195L335 160L315 155Z"/>
        <path d="M260 430Q260 400 290 385Q340 370 350 330Q380 300 425 340Q460 380 425 440Q440 520 390 530Q330 540 260 430ZM495 295Q500 280 600 275L635 480L520 495ZM615 315L745 303L768 462L635 480M525 325h22v22h-22ZM567 320h22v22h-22ZM527 357h22v22h-22ZM570 352h22v22h-22ZM532 390h22v22h-22ZM575 385h22v22h-22ZM652 350h20v20h-20ZM697 343h20v20h-20ZM657 380h20v20h-20ZM702 375h20v20h-20ZM558 490V442L590 438V485M685 470V425L712 420L718 462"/><circle cx="352" cy="457" r="37"/>
        <circle cx="888" cy="320" r="92"/><path d="M845 335L875 308L915 335L900 370H860ZM850 240L870 265L910 260L915 235M800 300L820 315L815 350M975 280L950 285L955 325L975 335M825 380L850 375L855 400M930 400L925 380L950 370M905 230L980 210L965 245L1060 235Q1000 260 990 310L1045 315L980 350"/>
        <ellipse cx="903" cy="85" rx="42" ry="48"/><ellipse cx="903" cy="90" rx="92" ry="90"/><path d="M865 60L835 30M905 37V0M940 60L970 30M945 105L985 130M895 133L890 175M865 110L825 130M820 90Q780 80 790 60L835 50M830 145Q780 150 770 185Q780 210 815 190L840 160M885 175L880 190L895 205L915 190V170M975 70L990 90L1015 90L1010 120L980 120"/>
        <path d="M50 465Q50 440 130 470Q120 430 150 430Q180 430 180 450M80 555L130 490L140 560M150 500L165 555M330 600Q370 550 430 550Q500 560 515 605L400 655M350 595L390 650M375 570L405 640M425 555V640M470 565L445 640M510 600L450 650M500 620Q530 620 520 660L500 670ZM605 570L635 535L675 570V590L640 600ZM570 660L590 645L615 645V705L600 700V665L590 670ZM940 625L960 610L980 635L960 658L935 645ZM950 720L970 710L1005 745L980 778L945 750ZM0 670H95L70 710H230M0 665Q30 610 90 610L140 625M95 670Q130 620 190 625M70 710L150 635M60 775L105 765M145 800Q210 760 215 710M340 690Q380 670 390 720L365 725L340 710M485 775L655 740M485 775L490 810M505 785h15v15h-15M615 745L625 810M300 800L370 760L360 810"/>
        <circle cx="778" cy="705" r="57"/><path d="M690 640Q680 590 720 590Q750 595 760 615Q770 580 810 585Q840 600 840 625Q880 610 900 640Q900 660 885 670Q915 680 900 720Q900 760 870 760Q860 800 820 795M690 640Q650 650 660 690Q650 720 680 730Q680 770 720 760Q730 800 770 790M725 700Q770 640 830 690M835 705L850 720L835 735M755 700v1M800 695v1M765 725Q790 740 800 720M905 690L915 790"/><path d="M915 440L985 430L970 490ZM1080 380H1030L1045 520L1080 535M1030 385Q1060 400 1080 395M1035 440L1080 450M1015 0Q1030 60 1080 80"/>
      </g>

      <!-- strip around the message box -->
      <path d="M18 1390Q10 1410 30 1406M62 1402Q65 1385 75 1403M125 1485V1494M195 1485Q205 1498 210 1485M310 1485V1494M620 1470L640 1440M570 1485L600 1490L719 1470M628 1490L719 1478M610 1400L590 1415M20 1480L28 1486L24 1490M0 1465Q10 1475 16 1470M600 1378L610 1402L650 1390M640 1395Q670 1400 680 1410M680 1378L700 1390L719 1375"/>
    </svg>

    <p class="date-chip">Today</p>

    <p class="notice">
      <svg class="lock" width="22" height="28" viewBox="0 0 22 28"><g fill="none" stroke="#d9bd7c" stroke-width="2.600"><rect x="1.500" y="11" width="19" height="15.500" rx="2"/><path d="M5.500 11V7Q5.500 1.500 11 1.500Q16.500 1.500 16.500 7V11"/></g><circle cx="11" cy="18.500" r="2.500" fill="#d9bd7c"/></svg>
      Messages and calls are end-to-end encrypted. No one outside of this chat, not even WhatsApp, can read or listen to them. Tap to learn more.
    </p>

    <div class="bubble">
      <span class="bubble-text">Hey im gonna share my location with ya in a min.</span>
      <span class="meta">6:55 pm <svg width="22" height="20" viewBox="0 0 22 20"><path fill="none" stroke="#86a79b" stroke-width="2.400" d="M1.500 11L7 17L20 2"/></svg></span>
    </div>
  </main>

  <form class="composer">
    <div class="message-box">
      <button type="button" class="icon-button" aria-label="Emoji"><svg width="36" height="36" viewBox="0 0 36 36"><circle cx="18" cy="18" r="15.800" fill="none" stroke="#8696a0" stroke-width="3"/><g fill="#8696a0"><circle cx="12" cy="14" r="2.700"/><circle cx="24" cy="14" r="2.700"/><path d="M10 21H26Q24 27 18 27Q12 27 10 21Z"/></g></svg></button>
      <input type="text" id="message" class="message-input" placeholder="Message" aria-label="Message">
      <div class="attach">
        <button type="button" class="icon-button" aria-label="Attach"><svg width="36" height="36" viewBox="0 0 36 36"><path fill="none" stroke="#8696a0" stroke-width="3" stroke-linecap="round" d="M28 10V24.500Q28 34 18 34Q8 34 8 24.500V9Q8 2 15 2Q22 2 22 9V23.500Q22 27 18.500 27Q15 27 15 23.500V10"/></svg></button>
        <svg class="pointer" width="272" height="580" viewBox="200 797 272 580"><path fill="none" stroke="#33ff9c" stroke-width="11" stroke-linecap="round" stroke-linejoin="round" d="M208 802L459 1366M416 1336L459 1368L465 1315"/></svg>
        <span class="ring"></span>
      </div>
      <button type="button" class="icon-button" aria-label="Camera"><svg width="36" height="36" viewBox="0 0 36 36"><path fill="none" stroke="#8696a0" stroke-width="3" stroke-linejoin="round" d="M2 7H9L12 3H24L27 7H34V32H2Z"/><circle cx="18" cy="19" r="6.500" fill="none" stroke="#8696a0" stroke-width="3.400"/></svg></button>
    </div>
    <button type="button" class="mic" aria-label="Record voice message"><svg width="26" height="36" viewBox="0 0 26 36"><rect x="8" y="1" width="10" height="21" rx="5" fill="#0b2318"/><path fill="none" stroke="#0b2318" stroke-width="3" d="M2 17Q3 27 13 27Q23 27 24 17M13 27V35"/></svg></button>
  </form>

  <div class="nav-bar"><span class="nav-handle"></span></div>

</body>
</html>
```

FILE: styles.css
```css
* {
  box-sizing: border-box;
}

body {
  margin: 0;
  min-height: 100vh;
  display: flex;
  flex-direction: column;
  position: relative;
  overflow-x: hidden;
  background: #07121a;
  color: #e9edef;
  font-family: "Noto Sans", Roboto, sans-serif;
}

h1,
p {
  margin: 0;
}

button {
  border: none;
  padding: 0;
  background: none;
  cursor: pointer;
}

svg {
  display: block;
  flex: none;
}

.status-bar {
  height: 75px;
  padding: 16px 118px 0 44px;
  display: flex;
  align-items: center;
  justify-content: space-between;
  background: #0b141a;
  font-size: 25px;
  line-height: 28px;
}

.status-left,
.status-right,
.battery {
  display: flex;
  align-items: center;
}

.status-left {
  gap: 10px;
}

.status-right {
  gap: 9px;
}

.battery {
  gap: 4px;
}

.app-bar {
  height: 99px;
  padding: 0 35px 0 15px;
  display: flex;
  align-items: center;
  background: #0b141a;
  border-bottom: 1px solid #1a262d;
}

.icon-button {
  display: flex;
  align-items: center;
  justify-content: center;
}

.avatar {
  margin-left: 7px;
}

.contact {
  margin-left: 14px;
  flex: 1;
  font-size: 36px;
  line-height: 48px;
  font-weight: 500;
}

.actions {
  display: flex;
  align-items: center;
  gap: 52px;
}

.chat {
  flex: 1;
  padding: 8px 29px 0;
  display: flex;
  flex-direction: column;
  align-items: center;
}

.wallpaper {
  position: absolute;
  top: 174px;
  left: 0;
  width: 100%;
  height: calc(100% - 200px);
  z-index: -1;
  fill: none;
  stroke: #152128;
  stroke-width: 2;
  stroke-linejoin: round;
  stroke-linecap: round;
}

.wallpaper .large {
  stroke-width: 6;
}

.date-chip {
  padding: 10px 16px;
  border-radius: 14px;
  background: #1f2c33;
  color: #8d999f;
  font-size: 27px;
  line-height: 38px;
}

.notice {
  width: 584px;
  max-width: 100%;
  margin-top: 15px;
  padding: 12px 16px 10px;
  border-radius: 14px;
  background: #202c33;
  color: #fbd78b;
  font-size: 27px;
  line-height: 35px;
  text-align: center;
}

.lock {
  display: inline-block;
  vertical-align: -4px;
}

.bubble {
  position: relative;
  align-self: flex-end;
  width: 590px;
  max-width: 100%;
  margin-top: 17px;
  padding: 12px 24px 13px 18px;
  border-radius: 20px 0 20px 20px;
  background: #144d37;
  font-size: 34px;
  line-height: 43px;
}

.bubble::after {
  content: "";
  position: absolute;
  top: 0;
  right: -13px;
  width: 14px;
  height: 21px;
  background: #144d37;
  border-top-right-radius: 3px;
  clip-path: polygon(0 0, 100% 0, 100% 10%, 8% 80%, 8% 100%, 0 100%);
}

.meta {
  float: right;
  margin-top: 17px;
  margin-bottom: -10px;
  display: flex;
  align-items: center;
  gap: 6px;
  color: #86a79b;
  font-size: 24px;
  line-height: 32px;
}

.composer {
  padding: 0 8px 10px;
  display: flex;
  gap: 10px;
}

.message-box {
  flex: 1;
  min-width: 0;
  height: 83px;
  padding: 4px 23px 0 20px;
  display: flex;
  align-items: center;
  border-radius: 42px;
  background: #202c33;
}

.message-input {
  flex: 1;
  min-width: 0;
  margin: 0 20px;
  padding: 0;
  border: none;
  outline: none;
  background: none;
  color: #e9edef;
  font-family: inherit;
  font-size: 38px;
  line-height: 48px;
}

.message-input::placeholder {
  color: #8696a0;
  opacity: 1;
}

.attach {
  position: relative;
  margin-right: 45px;
}

.pointer {
  position: absolute;
  right: 43px;
  bottom: 86px;
  pointer-events: none;
}

.ring {
  position: absolute;
  top: -34px;
  left: -36px;
  width: 99px;
  height: 96px;
  border: 11px solid #33ff9c;
  border-radius: 50%;
  pointer-events: none;
}

.mic {
  width: 83px;
  height: 83px;
  display: flex;
  align-items: center;
  justify-content: center;
  border-radius: 50%;
  background: #21c063;
}

.nav-bar {
  height: 26px;
  display: flex;
  align-items: center;
  justify-content: center;
  background: #000;
}

.nav-handle {
  width: 30%;
  height: 7px;
  border-radius: 4px;
  background: #636363;
}
```
